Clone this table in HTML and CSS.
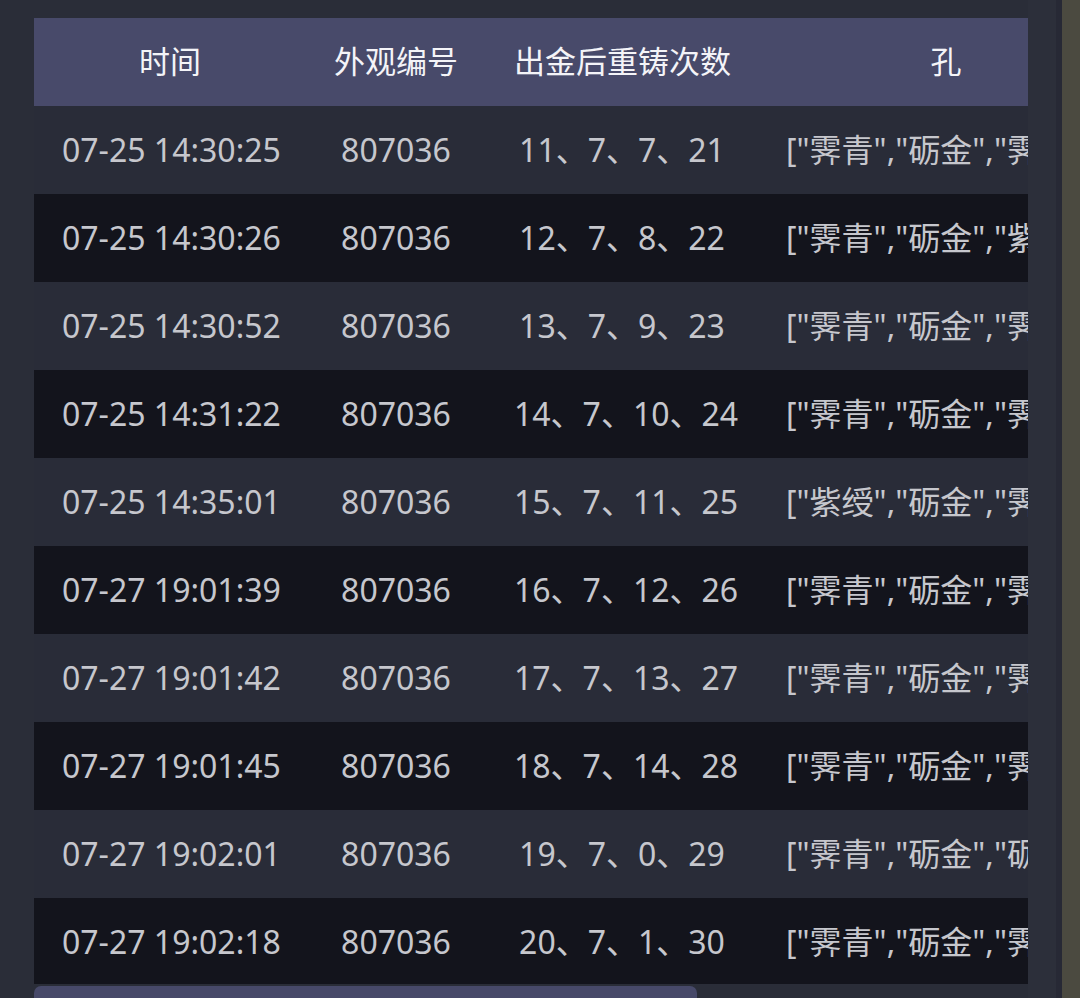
FILE: index.html
```html
<!DOCTYPE html>
<html lang="zh-CN">
<head>
<meta charset="utf-8">
<title>记录</title>
<link rel="stylesheet" href="styles.css">
</head>
<body>
<div class="page">
  <div class="main">
    <div class="scroller">
      <table class="records">
        <colgroup>
          <col class="c-time"><col class="c-id"><col class="c-count"><col class="c-hole"><col class="c-more">
        </colgroup>
        <thead>
          <tr><th>时间</th><th>外观编号</th><th>出金后重铸次数</th><th>孔</th><th></th></tr>
        </thead>
        <tbody>
          <tr><td>07-25 14:30:25</td><td>807036</td><td>11、7、7、21</td><td>["霁青","砺金","霁青","砺金"]</td><td></td></tr>
          <tr><td>07-25 14:30:26</td><td>807036</td><td>12、7、8、22</td><td>["霁青","砺金","紫绶","砺金"]</td><td></td></tr>
          <tr><td>07-25 14:30:52</td><td>807036</td><td>13、7、9、23</td><td>["霁青","砺金","霁青","紫绶"]</td><td></td></tr>
          <tr><td>07-25 14:31:22</td><td>807036</td><td>14、7、10、24</td><td>["霁青","砺金","霁青","砺金"]</td><td></td></tr>
          <tr><td>07-25 14:35:01</td><td>807036</td><td>15、7、11、25</td><td>["紫绶","砺金","霁青","砺金"]</td><td></td></tr>
          <tr><td>07-27 19:01:39</td><td>807036</td><td>16、7、12、26</td><td>["霁青","砺金","霁青","砺金"]</td><td></td></tr>
          <tr><td>07-27 19:01:42</td><td>807036</td><td>17、7、13、27</td><td>["霁青","砺金","霁青","紫绶"]</td><td></td></tr>
          <tr><td>07-27 19:01:45</td><td>807036</td><td>18、7、14、28</td><td>["霁青","砺金","霁青","砺金"]</td><td></td></tr>
          <tr><td>07-27 19:02:01</td><td>807036</td><td>19、7、0、29</td><td>["霁青","砺金","砺金","霁青"]</td><td></td></tr>
          <tr><td>07-27 19:02:18</td><td>807036</td><td>20、7、1、30</td><td>["霁青","砺金","霁青","砺金"]</td><td></td></tr>
        </tbody>
      </table>
    </div>
    <div class="hbar"><div class="hthumb"></div></div>
  </div>
  <div class="vgap"></div>
  <div class="vstrip"></div>
</div>
</body>
</html>
```

FILE: styles.css
```css
html, body {
  margin: 0;
  padding: 0;
  background: #2a2d38;
  height: 100%;
  overflow: hidden;
}

.page {
  display: flex;
  width: 1080px;
  height: 998px;
  font-family: "Noto Sans", "Noto Sans CJK SC", sans-serif;
}

.main {
  flex: 0 0 1028px;
  width: 1028px;
  min-width: 0;
  padding: 18px 0 0 34px;
  box-sizing: border-box;
  display: flex;
  flex-direction: column;
}

.scroller {
  width: 994px;
  overflow: hidden;
}

.records {
  table-layout: fixed;
  width: 1490px;
  border-collapse: collapse;
  border-spacing: 0;
}

.c-time { width: 272px; }
.c-id { width: 180px; }
.c-count { width: 272px; }
.c-hole { width: 376px; }
.c-more { width: 390px; }

.records th,
.records td {
  height: 88px;
  padding: 0 28px;
  text-align: center;
  white-space: nowrap;
  overflow: hidden;
  box-sizing: border-box;
  line-height: 1.2;
}

.records th {
  background: #484a6a;
  color: #f4f4f8;
  font-weight: 400;
  font-size: 31px;
}

.records td {
  color: #c6c7cd;
  font-size: 32px;
}

.records tbody tr:nth-child(odd) td { background: #292c38; }
.records tbody tr:nth-child(even) td { background: #13141c; }

.hbar {
  margin-top: 2px;
  width: 994px;
  height: 12px;
}

.hthumb {
  width: 663px;
  height: 12px;
  background: #474969;
  border-radius: 7px 7px 0 0;
}

.vgap {
  flex: 0 0 34px;
  background: #2c2f3a;
  border-right: 6px solid #272935;
  box-sizing: border-box;
}

.vstrip {
  flex: 0 0 18px;
  background: #4b4a40;
}
```
